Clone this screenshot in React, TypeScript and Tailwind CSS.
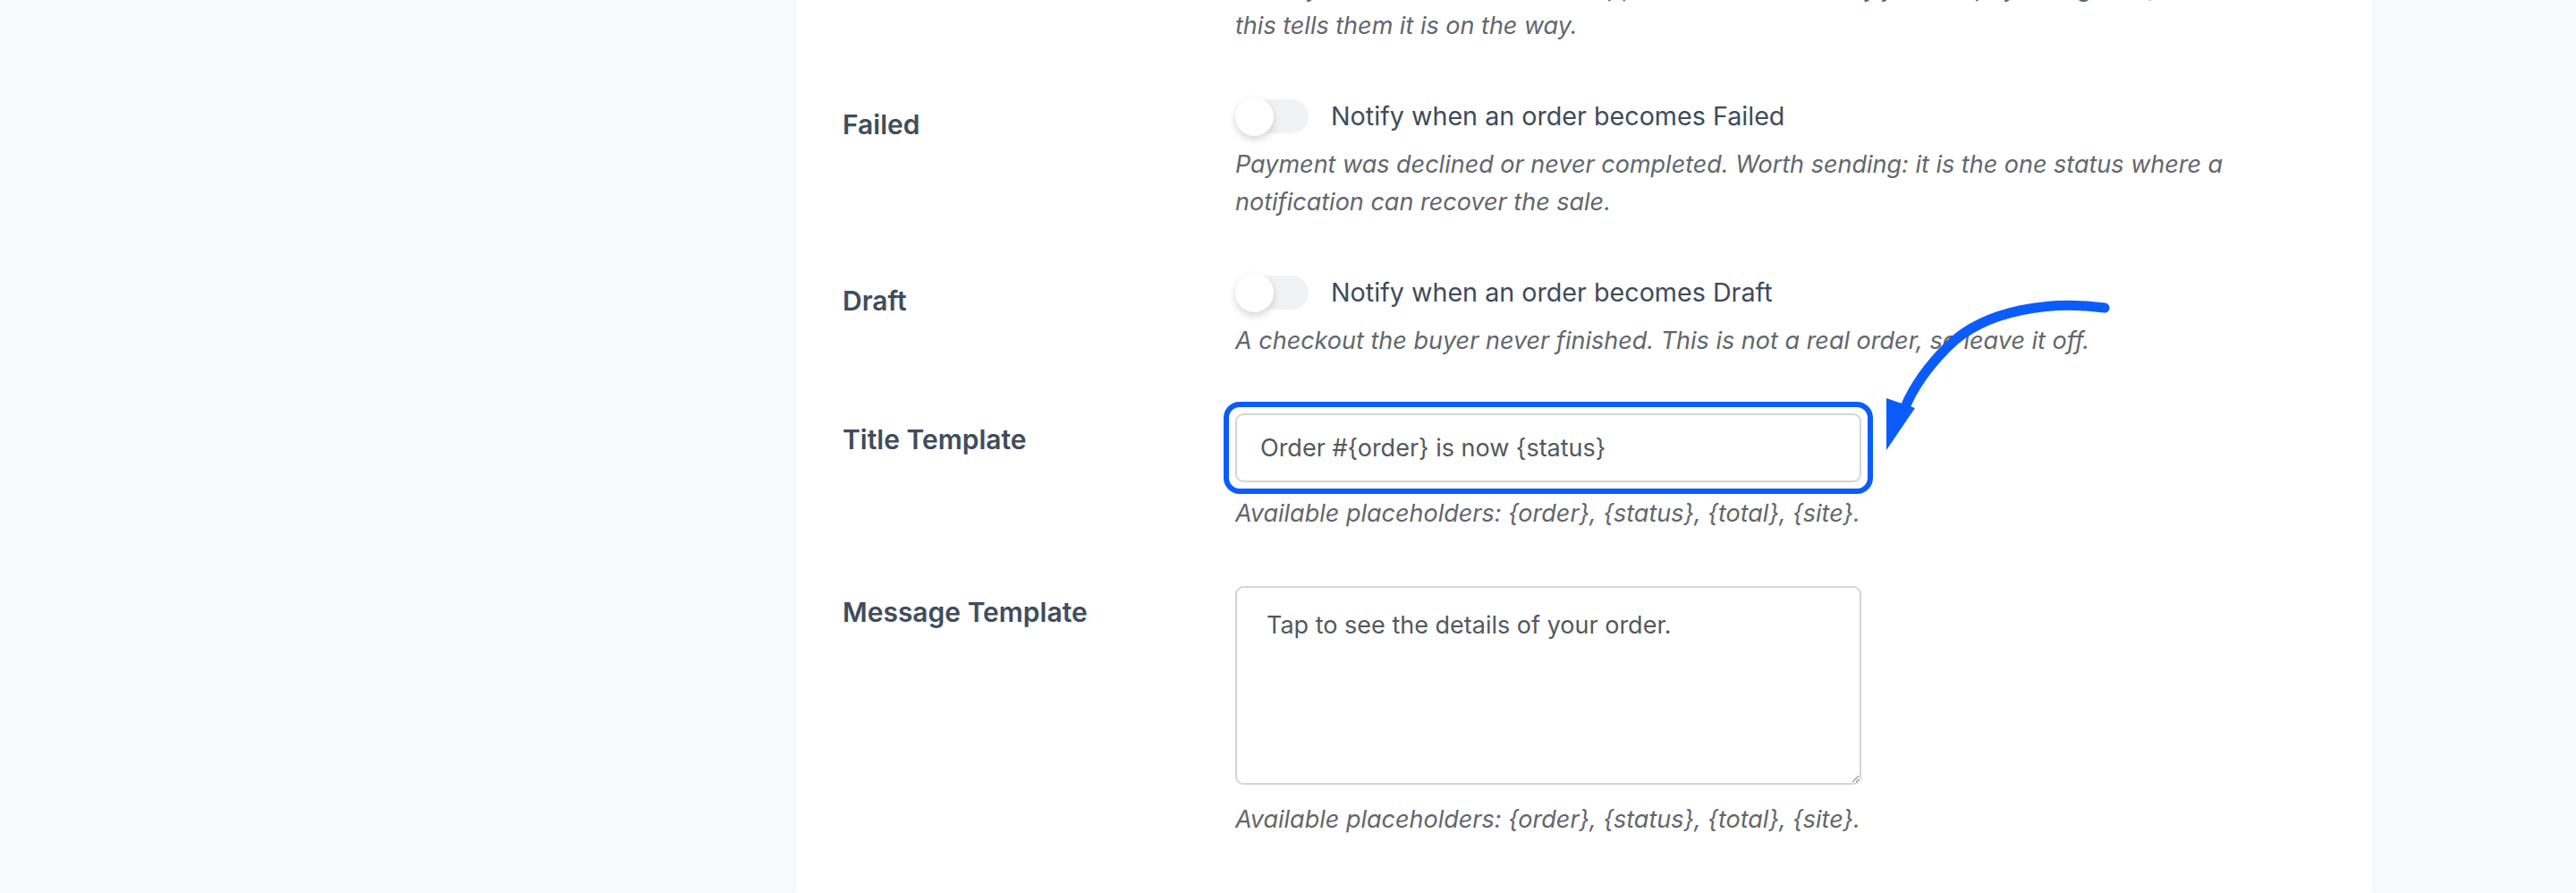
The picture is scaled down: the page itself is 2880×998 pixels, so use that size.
import type { ReactNode } from "react";

const font = { fontFamily: "Inter, 'Noto Sans', sans-serif" };

function Toggle() {
  return (
    <span className="relative inline-flex h-[38px] w-[82px] shrink-0 items-center rounded-full bg-[#f1f2f4]">
      <span className="h-[43px] w-[43px] rounded-full bg-white shadow-[0_4px_9px_rgba(0,0,0,0.16)]" />
    </span>
  );
}

function Row({ label, children }: { label: string; children: ReactNode }) {
  return (
    <div className="grid grid-cols-[439px_1220px]">
      <div className="pt-[40px] pb-[30px] text-[30px] leading-[39px] font-semibold text-[#414c5d]">
        {label}
      </div>
      <div className="py-[30px]">{children}</div>
    </div>
  );
}

function Help({ children, className = "" }: { children: ReactNode; className?: string }) {
  return <p className={`text-[27px] leading-[42px] italic text-[#62666d] ${className}`}>{children}</p>;
}

function StatusRow({ label, status, help }: { label: string; status: string; help: ReactNode }) {
  return (
    <Row label={label}>
      <label className="flex h-[40px] items-center gap-[25px]">
        <Toggle />
        <span className="text-[28.7px] leading-[40px] text-[#3f4a5b]">
          Notify when an order becomes {status}
        </span>
      </label>
      <Help className="mt-[13px]">{help}</Help>
    </Row>
  );
}

export default function App() {
  return (
    <div className="relative h-[998px] overflow-hidden bg-[#f9fafb] pl-[890px]" style={font}>
      <div className="-mt-[117px] min-h-[1115px] w-[1762px] bg-white pl-[52px] shadow-[0_0_8px_rgba(0,0,0,0.04)]">
        <StatusRow
          label="Completed"
          status="Completed"
          help={
            <>
              Usually means the order was shipped or handed over. If you sell physical goods,
              <br />
              this tells them it is on the way.
            </>
          }
        />
        <StatusRow
          label="Failed"
          status="Failed"
          help="Payment was declined or never completed. Worth sending: it is the one status where a notification can recover the sale."
        />
        <StatusRow
          label="Draft"
          status="Draft"
          help="A checkout the buyer never finished. This is not a real order, so leave it off."
        />

        {/* Title template, highlighted */}
        <Row label="Title Template">
          <div className="relative w-[700px]">
            <input
              type="text"
              defaultValue="Order #{order} is now {status}"
              className="block h-[77px] w-[700px] rounded-[9px] border-2 border-[#d4d4d4] bg-white px-[26px] text-[27px] text-[#52585f] outline-none"
            />
            <span className="pointer-events-none absolute -inset-[13px] rounded-[18px] border-[6px] border-[#0b5cff]" />
          </div>
          <Help className="mt-[14px]">
            Available placeholders: {"{order}"}, {"{status}"}, {"{total}"}, {"{site}"}.
          </Help>
        </Row>

        <Row label="Message Template">
          <textarea
            defaultValue="Tap to see the details of your order."
            className="block h-[222px] w-[700px] rounded-[9px] border-2 border-[#d4d4d4] bg-white px-[33px] py-[22px] text-[27px] leading-[40px] text-[#52585f] outline-none"
          />
          <Help className="mt-[18px]">
            Available placeholders: {"{order}"}, {"{status}"}, {"{total}"}, {"{site}"}.
          </Help>
        </Row>
      </div>

      {/* annotation arrow */}
      <svg
        className="pointer-events-none absolute left-[2080px] top-[319px]"
        width="290"
        height="200"
        viewBox="0 0 290 200"
        fill="none"
      >
        <path
          d="M273 25 C215 17 140 26 98 68 C76 90 60 112 50 136"
          stroke="#0b5cff"
          strokeWidth="11"
          strokeLinecap="round"
        />
        <polygon points="29,126 61,137 29,184" fill="#0b5cff" />
      </svg>
    </div>
  );
}
